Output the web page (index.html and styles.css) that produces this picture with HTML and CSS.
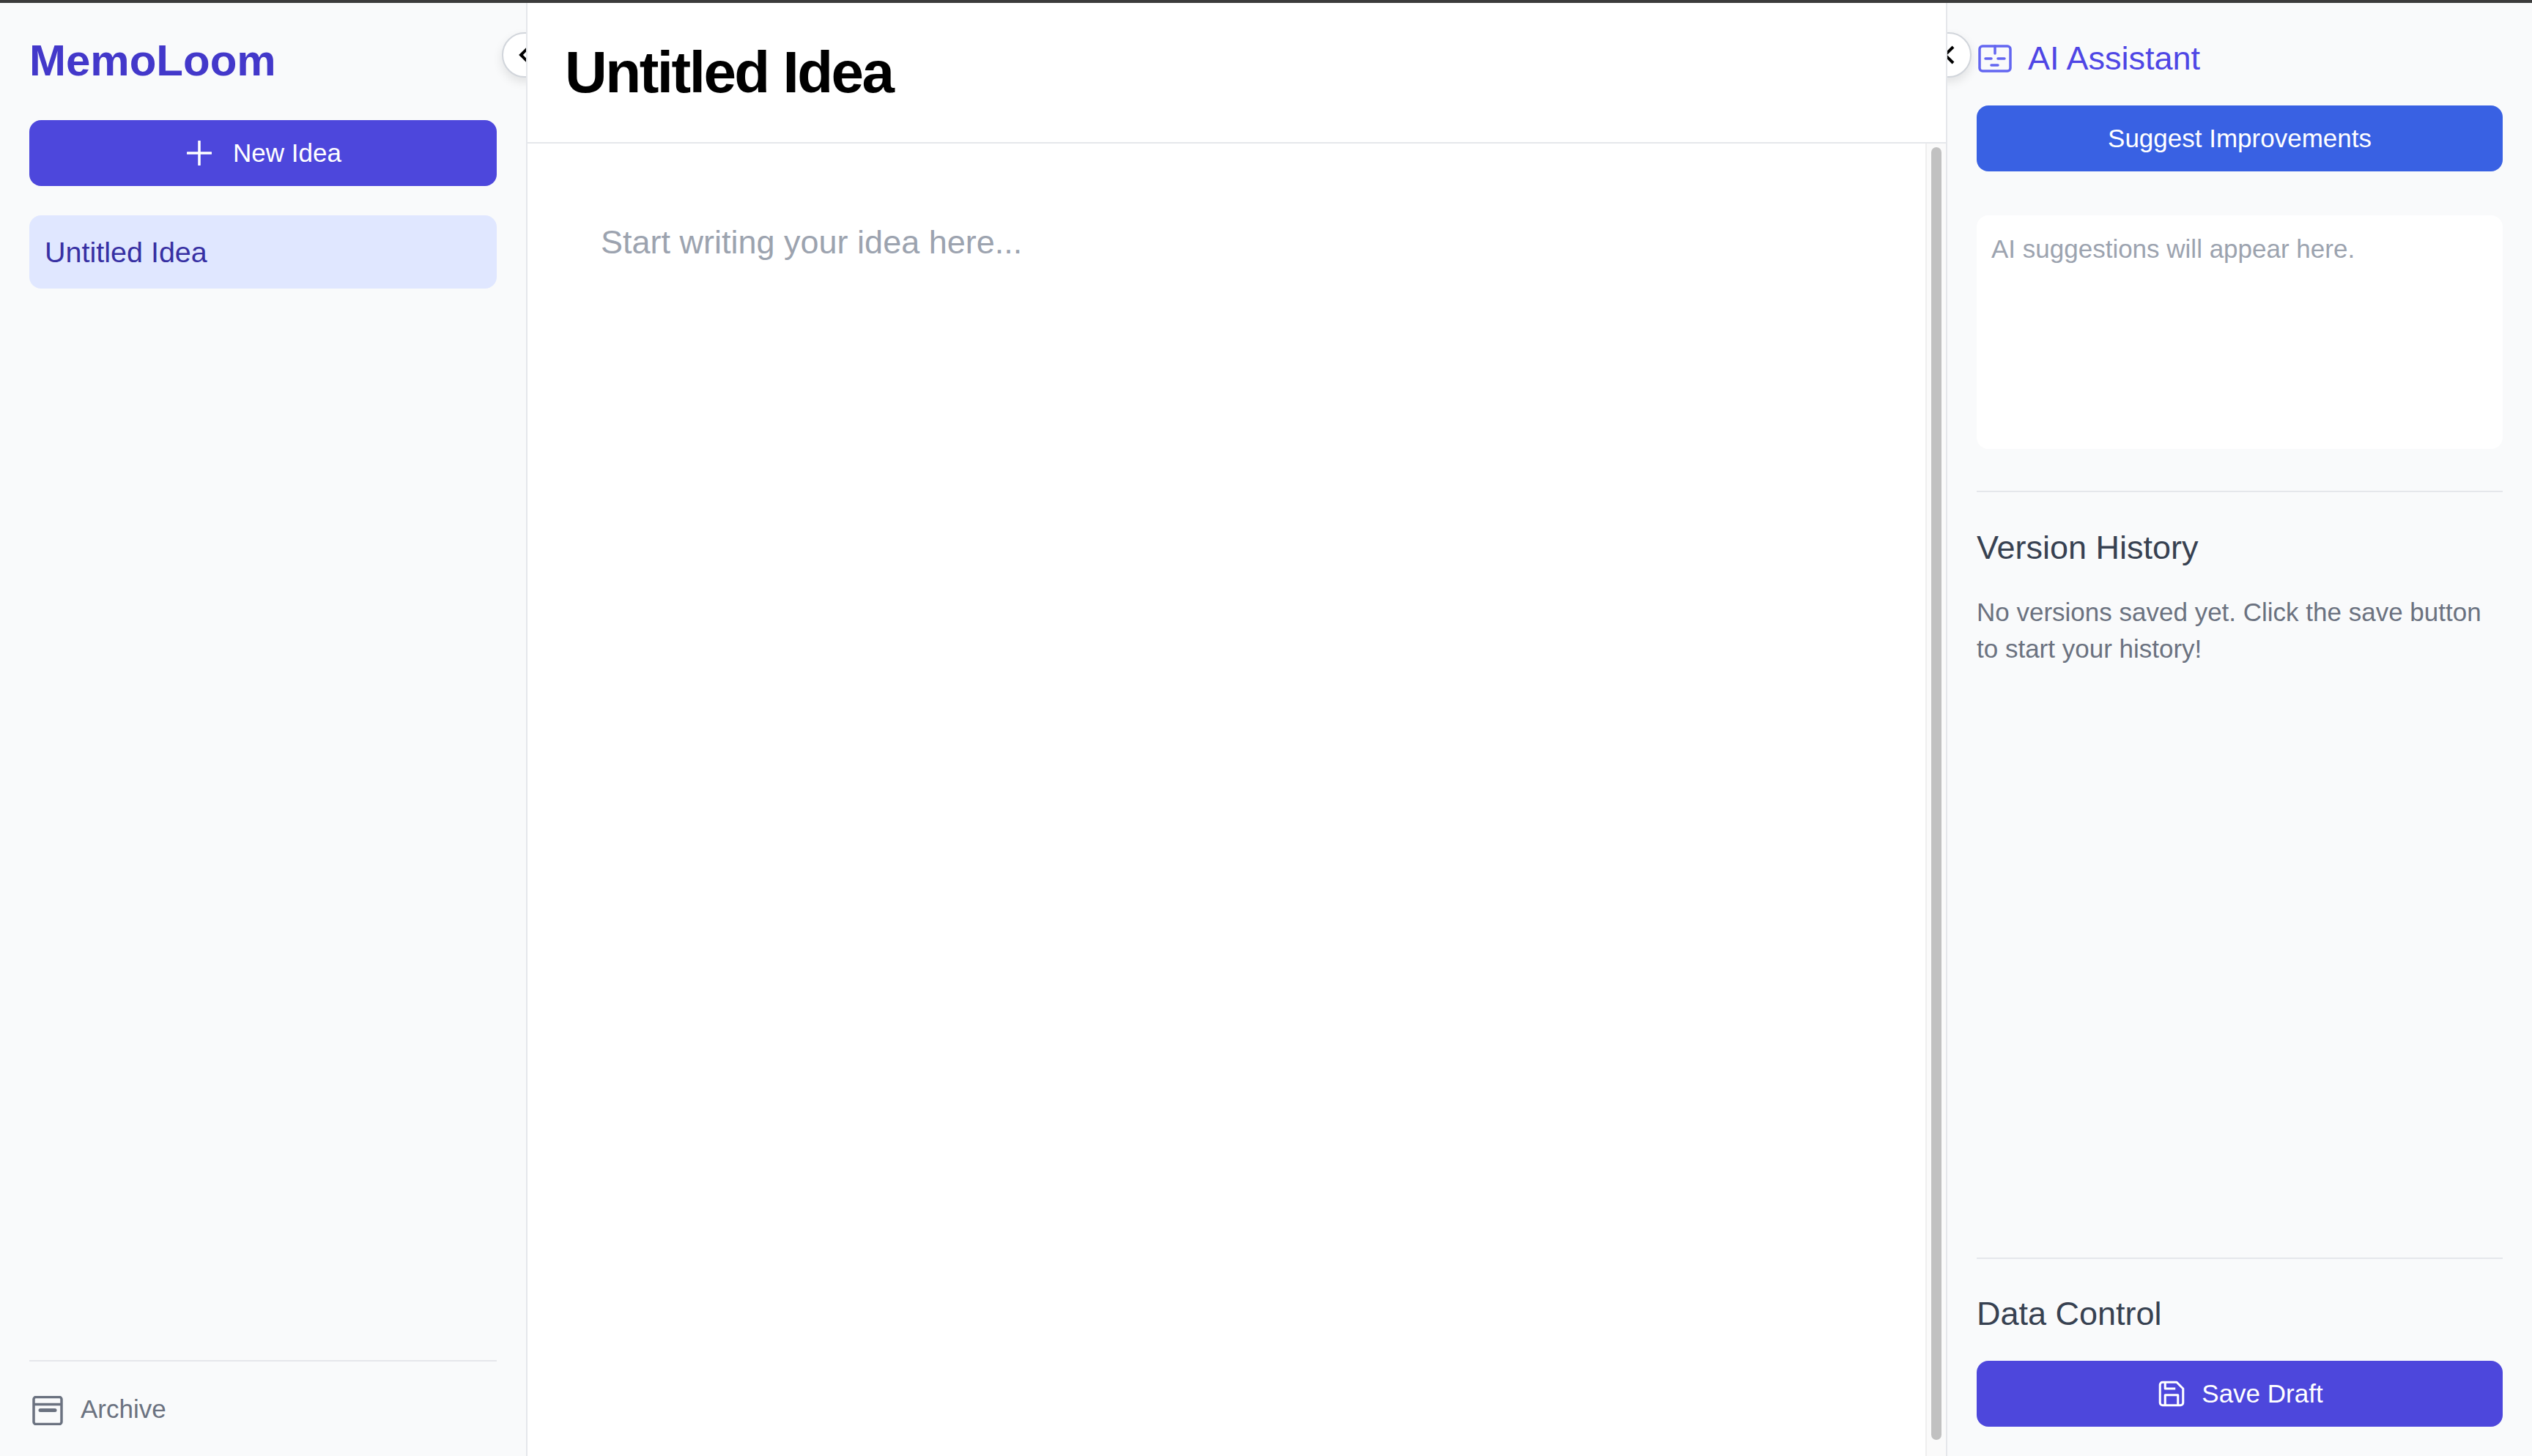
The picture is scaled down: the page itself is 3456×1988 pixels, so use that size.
FILE: index.html
```html
<!DOCTYPE html>
<html lang="en">

<head>
    <meta charset="UTF-8">
    <meta name="viewport" content="width=device-width, initial-scale=1.0">
    <title>MemoLoom</title>
    <link rel="stylesheet" href="styles.css">
</head>

<body>
    <div class="top-edge"></div>
    <div class="app">
        <aside class="sidebar">
            <button class="collapse-btn collapse-left">
                <svg width="20" height="28" viewBox="0 0 20 28"><polyline points="16,3 5,14 16,25" /></svg>
            </button>
            <h1 class="logo">MemoLoom</h1>
            <button class="btn btn-indigo new-btn">
                <svg class="plus-icon" width="34" height="34" viewBox="0 0 34 34"><path d="M17 1v32M1 17h32" /></svg>
                <span>New Idea</span>
            </button>
            <div class="idea-item">Untitled Idea</div>
            <div class="sidebar-footer">
                <svg class="archive-icon" width="42" height="40" viewBox="0 0 42 40">
                    <rect x="2" y="1.500" width="38" height="37" rx="3" />
                    <path d="M2 11.500h38" />
                    <path class="thick" d="M11 19.500h20" />
                </svg>
                <span>Archive</span>
            </div>
        </aside>

        <main class="main">
            <header class="main-header">
                <h2>Untitled Idea</h2>
            </header>
            <div class="main-body">
                <div class="editor">Start writing your idea here...</div>
                <div class="scroll-track">
                    <div class="scroll-thumb"></div>
                </div>
            </div>
        </main>

        <aside class="panel">
            <button class="collapse-btn collapse-right">
                <svg width="20" height="28" viewBox="0 0 20 28"><polyline points="16,3 5,14 16,25" /></svg>
            </button>
            <div class="panel-title">
                <svg class="ai-icon" width="46" height="38" viewBox="0 0 46 38">
                    <rect x="2" y="2" width="42" height="34" rx="4" />
                    <path d="M23 2v10M10 19h8M27 19h9M18 28h9" />
                </svg>
                <span>AI Assistant</span>
            </div>
            <button class="btn btn-blue">Suggest Improvements</button>
            <div class="suggest-box">AI suggestions will appear here.</div>
            <section class="panel-section">
                <h3>Version History</h3>
                <p>No versions saved yet. Click the save button to start your history!</p>
            </section>
            <section class="panel-section data-control">
                <h3>Data Control</h3>
                <button class="btn btn-indigo save-btn">
                    <svg class="save-icon" width="42" height="42" viewBox="0 0 24 24">
                        <path d="M19 21H5a2 2 0 0 1-2-2V5a2 2 0 0 1 2-2h11l5 5v11a2 2 0 0 1-2 2z" />
                        <polyline points="17 21 17 13 7 13 7 21" />
                        <polyline points="7 3 7 8 15 8" />
                    </svg>
                    <span>Save Draft</span>
                </button>
            </section>
        </aside>
    </div>
</body>

</html>
```

FILE: styles.css
```css
* {
    box-sizing: border-box;
}

html,
body {
    margin: 0;
    height: 100%;
}

body {
    display: flex;
    flex-direction: column;
    background-color: white;
    font-family: "Liberation Sans", Arial, sans-serif;
    overflow: hidden;
}

h1,
h2,
h3,
p {
    margin: 0;
}

svg {
    fill: none;
    flex-shrink: 0;
}

.top-edge {
    height: 4px;
    background-color: #3b3b3b;
}

.app {
    flex: 1;
    display: flex;
    min-height: 0;
}

/* left column */
.sidebar {
    position: relative;
    width: 720px;
    padding: 45px 40px 42px;
    background-color: #f9fafb;
    border-right: 2px solid #e5e7eb;
    display: flex;
    flex-direction: column;
    overflow: hidden;
}

.logo {
    height: 68px;
    margin-bottom: 47px;
    font-size: 60px;
    line-height: 68px;
    font-weight: 700;
    color: #4338ca;
}

.btn {
    width: 100%;
    height: 90px;
    border: none;
    border-radius: 16px;
    color: white;
    font-family: inherit;
    font-size: 35px;
    display: flex;
    align-items: center;
    justify-content: center;
}

.btn-indigo {
    background-color: #4d47dc;
}

.btn-blue {
    background-color: #3961e3;
}

.new-btn {
    gap: 29px;
    padding-left: 9px;
}

.plus-icon path {
    stroke: white;
    stroke-width: 3.5;
    stroke-linecap: round;
}

.idea-item {
    height: 100px;
    margin-top: 40px;
    padding-left: 21px;
    border-radius: 16px;
    background-color: #e0e7ff;
    color: #3730a3;
    font-size: 39.500px;
    line-height: 100px;
}

.sidebar-footer {
    margin-top: auto;
    padding-top: 47px;
    border-top: 2px solid #e5e7eb;
    display: flex;
    align-items: center;
    gap: 24px;
    padding-left: 4px;
    color: #6b7280;
    font-size: 35px;
    line-height: 36px;
}

.sidebar-footer span {
    margin-bottom: 4px;
}

.archive-icon rect,
.archive-icon path {
    stroke: #6b7280;
    stroke-width: 3.500;
}

.archive-icon .thick {
    stroke-width: 5;
    stroke-linecap: round;
}

/* round buttons on the column edges */
.collapse-btn {
    position: absolute;
    top: 40px;
    width: 62px;
    height: 62px;
    padding: 0;
    border: 2px solid #d1d5db;
    border-radius: 50%;
    background-color: white;
    box-shadow: 0 6px 14px rgba(0, 0, 0, 0.1);
    display: flex;
    align-items: center;
    justify-content: center;
}

.collapse-btn polyline {
    stroke: black;
    stroke-width: 4;
}

.collapse-left {
    right: -29px;
}

.collapse-right {
    left: -29px;
}

/* centre */
.main {
    flex: 1;
    min-width: 0;
    display: flex;
    flex-direction: column;
}

.main-header {
    height: 192px;
    padding-left: 51px;
    border-bottom: 2px solid #e5e7eb;
    display: flex;
    align-items: center;
}

.main-header h2 {
    font-size: 80px;
    font-weight: 700;
    letter-spacing: -2.500px;
    color: black;
}

.main-body {
    flex: 1;
    display: flex;
    min-height: 0;
}

.editor {
    flex: 1;
    padding: 105px 0 0 100px;
    color: #9ca3af;
    font-size: 45px;
    line-height: 60px;
}

.scroll-track {
    width: 28px;
    padding: 5px 6px 22px 6px;
    background-color: #fafafa;
    border-left: 2px solid #efefef;
}

.scroll-thumb {
    height: 100%;
    border-radius: 8px;
    background-color: #c1c1c1;
}

/* right column */
.panel {
    position: relative;
    width: 800px;
    padding: 48px 40px 40px;
    background-color: #f9fafb;
    border-left: 2px solid #e5e7eb;
    display: flex;
    flex-direction: column;
    overflow: hidden;
}

.panel-title {
    height: 56px;
    margin-bottom: 36px;
    padding-left: 2px;
    display: flex;
    align-items: center;
    gap: 22px;
    color: #4f46e5;
    font-size: 45px;
}

.ai-icon rect,
.ai-icon path {
    stroke: #6366f1;
    stroke-width: 3.500;
    stroke-linecap: round;
}

.suggest-box {
    height: 319px;
    margin-top: 60px;
    padding: 26px 20px;
    border-radius: 16px;
    background-color: white;
    color: #9ca3af;
    font-size: 35px;
    line-height: 40px;
}

.panel-section {
    margin-top: 57px;
    padding-top: 50px;
    border-top: 2px solid #e5e7eb;
}

.panel-section h3 {
    font-size: 45px;
    line-height: 52px;
    font-weight: 400;
    color: #374151;
}

.panel-section p {
    margin-top: 37px;
    color: #6b7280;
    font-size: 35px;
    line-height: 50px;
}

.data-control {
    margin-top: auto;
    padding-top: 49px;
}

.save-btn {
    margin-top: 38px;
    gap: 20px;
}

.save-icon path,
.save-icon polyline {
    stroke: white;
    stroke-width: 1.750;
    stroke-linejoin: round;
}
```
